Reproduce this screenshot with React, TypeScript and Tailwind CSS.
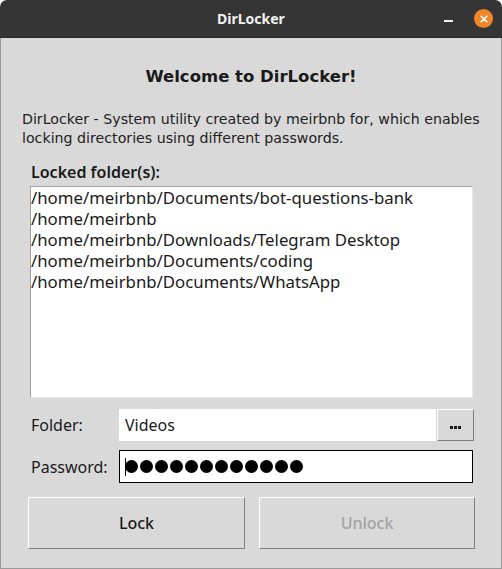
const lockedFolders = [
  "/home/meirbnb/Documents/bot-questions-bank",
  "/home/meirbnb",
  "/home/meirbnb/Downloads/Telegram Desktop",
  "/home/meirbnb/Documents/coding",
  "/home/meirbnb/Documents/WhatsApp",
];

const uiFont = "font-['Noto_Sans',sans-serif]";
const dejavu = "font-['DejaVu_Sans',sans-serif]";

function TitleBar() {
  return (
    <div className="grid h-[38px] grid-cols-[1fr_auto_1fr] items-center rounded-t-[7px] border-b border-[#2a2a2a] bg-[#353535]">
      <div />
      <span className={`${uiFont} text-[14px] font-bold text-[#f2f2f2]`}>DirLocker</span>
      <div className="flex items-center justify-end gap-[21px] pr-[9px]">
        <span className="mt-[5px] h-[2px] w-[9px] bg-[#f2f2f2]" />
        <span className="flex h-[19px] w-[19px] items-center justify-center rounded-full bg-[#f0862a]">
          <svg viewBox="0 0 10 10" className="h-[8px] w-[8px]">
            <path d="M1.5 1.5 L8.5 8.5 M8.5 1.5 L1.5 8.5" stroke="#fff" strokeWidth="2" strokeLinecap="round" />
          </svg>
        </span>
      </div>
    </div>
  );
}

function RaisedButton({ children, className, disabled }: { children: React.ReactNode; className: string; disabled?: boolean }) {
  return (
    <button
      disabled={disabled}
      className={`flex items-center justify-center border border-t-white border-l-white border-b-[#7f7f7f] border-r-[#7f7f7f] bg-[#d9d9d9] ${uiFont} ${className} ${disabled ? "text-[#a3a3a3]" : "text-[#1a1a1a]"}`}
    >
      {children}
    </button>
  );
}

export default function App() {
  return (
    <div className="flex h-[569px] w-[502px] flex-col bg-white">
      <TitleBar />
      <div className="flex flex-1 flex-col border-x border-b border-[#9a9a9a] bg-[#d9d9d9] text-[#1a1a1a]">
        <h1 className={`${dejavu} mt-[27px] text-center text-[16.5px] font-bold leading-[24px]`}>Welcome to DirLocker!</h1>
        <p className={`${dejavu} mt-[21px] pl-[21px] pr-[8px] text-[14.2px] leading-[19px] text-[#222]`}>
          DirLocker - System utility created by meirbnb for, which enables locking directories using different passwords.
        </p>
        <p className={`${uiFont} mt-[12px] pl-[30px] text-[16px] font-semibold leading-[24px]`}>Locked folder(s):</p>
        <div className="ml-[29px] mt-[2px] h-[212px] w-[443px] border border-t-[#a0a0a0] border-l-[#a0a0a0] border-b-[#eaeaea] border-r-[#eaeaea] bg-white">
          {lockedFolders.map((folder) => (
            <div key={folder} className={`${uiFont} text-[16.8px] leading-[21px]`}>
              {folder}
            </div>
          ))}
        </div>

        <div className="mt-[11px] flex items-center">
          <span className={`${uiFont} w-[118px] pl-[30px] text-[16px]`}>Folder:</span>
          <div className={`${uiFont} flex h-[32px] w-[317px] items-center bg-white pl-[6px] text-[16px]`}>Videos</div>
          <RaisedButton className="ml-[1px] h-[32px] w-[37px] gap-[1px] pt-[4px]">
            <span className="h-[3px] w-[3px] bg-[#1a1a1a]" />
            <span className="h-[3px] w-[3px] bg-[#1a1a1a]" />
            <span className="h-[3px] w-[3px] bg-[#1a1a1a]" />
          </RaisedButton>
        </div>

        <div className="mt-[9px] flex items-center">
          <span className={`${uiFont} w-[118px] pl-[30px] text-[16px]`}>Password:</span>
          <div className="flex h-[33px] w-[354px] items-center border border-black bg-white pl-[5px]">
            <span className="h-[18px] w-[1px] bg-black" />
            <div className="ml-[-1px] flex gap-[2px]">
              {Array.from({ length: 12 }).map((_, i) => (
                <span key={i} className="h-[13px] w-[13px] rounded-full bg-black" />
              ))}
            </div>
          </div>
        </div>

        <div className="mt-[14px] flex gap-[14px] pl-[27px]">
          <RaisedButton className="h-[52px] w-[217px] text-[16px] font-medium">Lock</RaisedButton>
          <RaisedButton disabled className="h-[52px] w-[216px] text-[16px] font-medium">Unlock</RaisedButton>
        </div>
      </div>
    </div>
  );
}
